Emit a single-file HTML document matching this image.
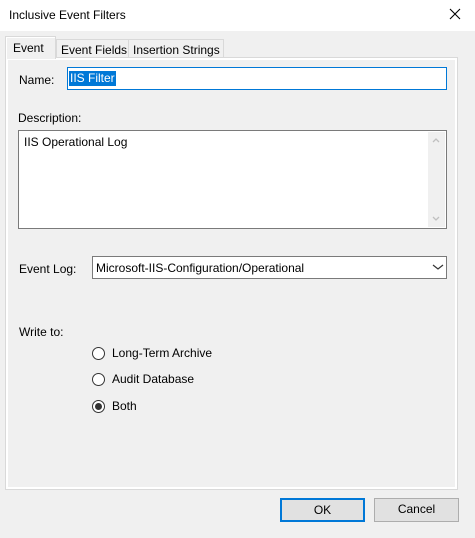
<!DOCTYPE html>
<html><head><style>
*{margin:0;padding:0;box-sizing:border-box}
body{width:475px;height:538px;background:#f0f0f0;font-family:"Liberation Sans",sans-serif;font-size:12px;color:#000;position:relative;overflow:hidden;white-space:nowrap}
.a{position:absolute}
.title{left:0;top:0;width:475px;height:31px;background:#fff}
.panel{left:5px;top:57px;width:453px;height:433px;border:1px solid #d9d9d9;box-shadow:inset 2px 2px 0 #fff,inset -2px -2px 0 #fff;background:#f0f0f0}
.tab{height:18px;border:1px solid #d9d9d9;border-bottom:none;background:#f0f0f0;padding:3px 0 0 4px}
.box{background:#fff;border:1px solid #7a7a7a}
.btn{border:1px solid #adadad;background:#e1e1e1;text-align:center;line-height:21px}
.radio{width:13px;height:13px;border:1px solid #333;border-radius:50%;background:#fff}
</style></head><body>
<div class="a title"></div>
<div class="a" style="left:9px;top:8px">Inclusive Event Filters</div>
<svg class="a" style="left:449px;top:8px" width="12" height="12"><path d="M1 1L11 11M11 1L1 11" stroke="#000" stroke-width="1.1"/></svg>
<div class="a panel"></div>
<div class="a tab" style="left:56px;top:39px;width:73px">Event Fields</div>
<div class="a tab" style="left:128px;top:39px;width:96px">Insertion Strings</div>
<div class="a tab" style="left:5px;top:36px;width:51px;height:23px;background:#f0f0f0;padding-top:4px;padding-left:7px;border-color:#d9d9d9;box-shadow:inset 1px 1px 0 #fff;z-index:2">Event</div>
<div class="a" style="left:19px;top:73px">Name:</div>
<div class="a" style="left:67px;top:67px;width:380px;height:23px;border:1px solid #0078d7;background:#fff"></div>
<div class="a" style="left:69px;top:71px;background:#0078d7;color:#fff;padding:1px 1px 1px 1px;line-height:13px">IIS Filter</div>
<div class="a" style="left:18px;top:111px">Description:</div>
<div class="a box" style="left:18px;top:130px;width:429px;height:99px"></div>
<div class="a" style="left:428px;top:132px;width:17px;height:95px;background:#f0f0f0"></div>
<svg class="a" style="left:431px;top:136px" width="10" height="90"><path d="M2 6L5 3L8 6" stroke="#c0c0c0" fill="none" stroke-width="1.3"/><path d="M2 81L5 84L8 81" stroke="#c0c0c0" fill="none" stroke-width="1.3"/></svg>
<div class="a" style="left:24px;top:135px">IIS Operational Log</div>
<div class="a" style="left:19px;top:262px">Event Log:</div>
<div class="a box" style="left:92px;top:256px;width:355px;height:23px"></div>
<div class="a" style="left:96px;top:261px">Microsoft-IIS-Configuration/Operational</div>
<svg class="a" style="left:432px;top:263px" width="12" height="8"><path d="M1 2L6 6L11 2" stroke="#333" fill="none" stroke-width="1.2"/></svg>
<div class="a" style="left:19px;top:325px">Write to:</div>
<div class="a radio" style="left:92px;top:347px"></div>
<div class="a" style="left:112px;top:346px">Long-Term Archive</div>
<div class="a radio" style="left:92px;top:373px"></div>
<div class="a" style="left:112px;top:372px">Audit Database</div>
<div class="a radio" style="left:92px;top:400px"></div>
<div class="a" style="left:96px;top:404px;width:5px;height:5px;border-radius:50%;background:#333;transform:scale(1.4)"></div>
<div class="a" style="left:112px;top:399px">Both</div>
<div class="a btn" style="left:280px;top:498px;width:85px;height:24px;border:2px solid #0078d7;line-height:20px">OK</div>
<div class="a btn" style="left:374px;top:498px;width:85px;height:24px">Cancel</div>
</body></html>
